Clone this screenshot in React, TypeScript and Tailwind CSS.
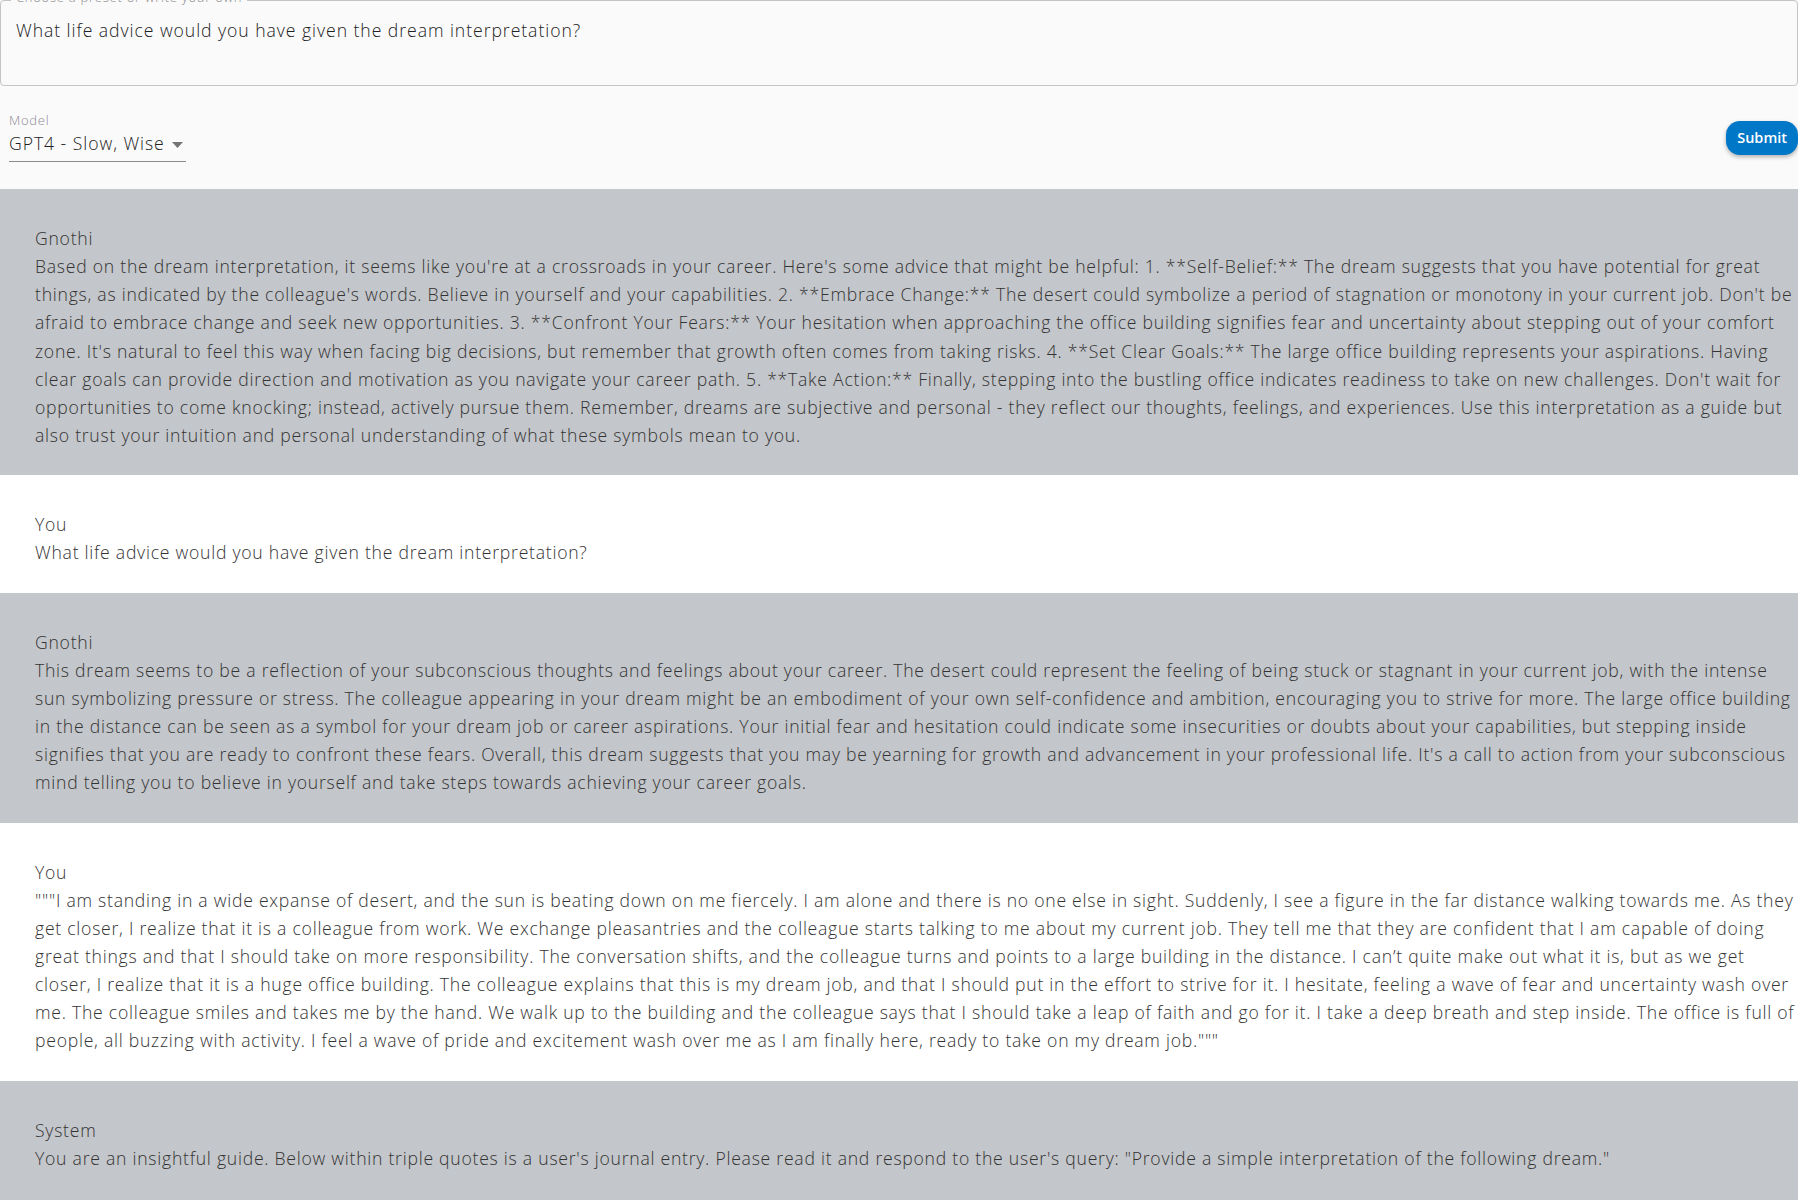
import React from "react";

type Msg = { role: string; text: string; shaded: boolean };

const messages: Msg[] = [
  {
    role: "Gnothi",
    shaded: true,
    text: "Based on the dream interpretation, it seems like you're at a crossroads in your career. Here's some advice that might be helpful: 1. **Self-Belief:** The dream suggests that you have potential for great things, as indicated by the colleague's words. Believe in yourself and your capabilities. 2. **Embrace Change:** The desert could symbolize a period of stagnation or monotony in your current job. Don't be afraid to embrace change and seek new opportunities. 3. **Confront Your Fears:** Your hesitation when approaching the office building signifies fear and uncertainty about stepping out of your comfort zone. It's natural to feel this way when facing big decisions, but remember that growth often comes from taking risks. 4. **Set Clear Goals:** The large office building represents your aspirations. Having clear goals can provide direction and motivation as you navigate your career path. 5. **Take Action:** Finally, stepping into the bustling office indicates readiness to take on new challenges. Don't wait for opportunities to come knocking; instead, actively pursue them. Remember, dreams are subjective and personal - they reflect our thoughts, feelings, and experiences. Use this interpretation as a guide but also trust your intuition and personal understanding of what these symbols mean to you.",
  },
  {
    role: "You",
    shaded: false,
    text: "What life advice would you have given the dream interpretation?",
  },
  {
    role: "Gnothi",
    shaded: true,
    text: "This dream seems to be a reflection of your subconscious thoughts and feelings about your career. The desert could represent the feeling of being stuck or stagnant in your current job, with the intense sun symbolizing pressure or stress. The colleague appearing in your dream might be an embodiment of your own self-confidence and ambition, encouraging you to strive for more. The large office building in the distance can be seen as a symbol for your dream job or career aspirations. Your initial fear and hesitation could indicate some insecurities or doubts about your capabilities, but stepping inside signifies that you are ready to confront these fears. Overall, this dream suggests that you may be yearning for growth and advancement in your professional life. It's a call to action from your subconscious mind telling you to believe in yourself and take steps towards achieving your career goals.",
  },
  {
    role: "You",
    shaded: false,
    text: "\"\"\"I am standing in a wide expanse of desert, and the sun is beating down on me fiercely. I am alone and there is no one else in sight. Suddenly, I see a figure in the far distance walking towards me. As they get closer, I realize that it is a colleague from work. We exchange pleasantries and the colleague starts talking to me about my current job. They tell me that they are confident that I am capable of doing great things and that I should take on more responsibility. The conversation shifts, and the colleague turns and points to a large building in the distance. I can\u2019t quite make out what it is, but as we get closer, I realize that it is a huge office building. The colleague explains that this is my dream job, and that I should put in the effort to strive for it. I hesitate, feeling a wave of fear and uncertainty wash over me. The colleague smiles and takes me by the hand. We walk up to the building and the colleague says that I should take a leap of faith and go for it. I take a deep breath and step inside. The office is full of people, all buzzing with activity. I feel a wave of pride and excitement wash over me as I am finally here, ready to take on my dream job.\"\"\"",
  },
  {
    role: "System",
    shaded: true,
    text: "You are an insightful guide. Below within triple quotes is a user's journal entry. Please read it and respond to the user's query: \"Provide a simple interpretation of the following dream.\"",
  },
];

function Message({ msg, last }: { msg: Msg; last: boolean }) {
  return (
    <div
      className={
        (msg.shaded ? "bg-[#c3c6ca] " : "bg-white ") +
        (last ? "flex-1 " : "") +
        "pl-[35px] pr-0 pt-[35px] pb-[26px] text-[17.6px] leading-[28.16px] text-[#333]"
      }
    >
      <div>{msg.role}</div>
      <div>{msg.text}</div>
    </div>
  );
}

export default function App() {
  return (
    <div className="flex min-h-screen flex-col bg-[#fafafa] font-['Open_Sans',sans-serif] font-light tracking-[0.75px]">
      <div className="flex flex-col">
        <div className="relative h-[86px] rounded-[4px] border border-[#c4c4c4] px-[15px] pt-[17px]">
          <span className="absolute left-[10px] top-[-10px] bg-[#fafafa] px-[5px] text-[13px] leading-[13px] text-[#8a8a8a]">
            Choose a preset or write your own
          </span>
          <div className="text-[17.6px] leading-[25px] tracking-[0.95px] text-[#222]">
            What life advice would you have given the dream interpretation?
          </div>
        </div>

        <div className="flex h-[103px] items-start justify-between">
          <div className="ml-[9px] mt-[26px] flex w-[177px] flex-col">
            <div className="text-[13px] leading-[16px] text-[#8f8a96]">Model</div>
            <div className="mt-[1px] flex h-[33px] items-start border-b border-[#8c8c8c]">
              <span className="text-[17.6px] leading-[28px] tracking-[0.95px] text-[#222]">GPT4 - Slow, Wise</span>
              <svg className="ml-[7px] mt-[13px]" width="11" height="6" viewBox="0 0 11 6">
                <path d="M0 0 L11 0 L5.5 6 Z" fill="#757575" />
              </svg>
            </div>
          </div>
          <button className="mt-[35px] h-[34px] rounded-[14px] bg-[#0077c7] px-[11px] text-[14.5px] font-semibold tracking-normal text-white shadow-[0_2px_4px_rgba(0,0,0,0.3)]">
            Submit
          </button>
        </div>
      </div>

      <div className="flex flex-1 flex-col">
        {messages.map((m, i) => (
          <Message key={i} msg={m} last={i === messages.length - 1} />
        ))}
      </div>
    </div>
  );
}
